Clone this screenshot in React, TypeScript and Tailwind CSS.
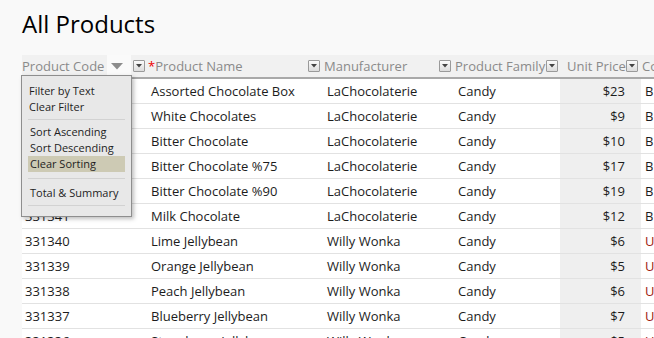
import React from "react";

type Row = { code: string; name: string; mfr: string; fam: string; price: string; last: string; red?: boolean };

const rows: Row[] = [
  { code: "331346", name: "Assorted Chocolate Box", mfr: "LaChocolaterie", fam: "Candy", price: "$23", last: "B" },
  { code: "331345", name: "White Chocolates", mfr: "LaChocolaterie", fam: "Candy", price: "$9", last: "B" },
  { code: "331344", name: "Bitter Chocolate", mfr: "LaChocolaterie", fam: "Candy", price: "$10", last: "B" },
  { code: "331343", name: "Bitter Chocolate %75", mfr: "LaChocolaterie", fam: "Candy", price: "$17", last: "B" },
  { code: "331342", name: "Bitter Chocolate %90", mfr: "LaChocolaterie", fam: "Candy", price: "$19", last: "B" },
  { code: "331341", name: "Milk Chocolate", mfr: "LaChocolaterie", fam: "Candy", price: "$12", last: "B" },
  { code: "331340", name: "Lime Jellybean", mfr: "Willy Wonka", fam: "Candy", price: "$6", last: "U", red: true },
  { code: "331339", name: "Orange Jellybean", mfr: "Willy Wonka", fam: "Candy", price: "$5", last: "U", red: true },
  { code: "331338", name: "Peach Jellybean", mfr: "Willy Wonka", fam: "Candy", price: "$6", last: "U", red: true },
  { code: "331337", name: "Blueberry Jellybean", mfr: "Willy Wonka", fam: "Candy", price: "$7", last: "U", red: true },
  { code: "331336", name: "Strawberry Jellybean", mfr: "Willy Wonka", fam: "Candy", price: "$5", last: "U", red: true },
];

function DropBox() {
  return (
    <span className="flex h-[12px] w-[12px] shrink-0 items-center justify-center rounded-[1px] border border-[#9a9a9a] bg-gradient-to-b from-[#fbfbfb] to-[#dcdcdc]">
      <svg width="6" height="4" viewBox="0 0 6 4">
        <path d="M0 0 L6 0 L3 3.5 Z" fill="#444" />
      </svg>
    </span>
  );
}

const cols = "grid grid-cols-[126px_175px_130px_107px_81px_40px]";

export default function App() {
  return (
    <div className="relative h-[338px] w-[654px] overflow-hidden bg-[#f9f9f9] font-['Open_Sans',sans-serif]">
      <h1 className="pl-[22px] pt-[8px] text-[24px] leading-[32px] text-black">All Products</h1>

      <div className="ml-[22px] mt-[15px] w-[680px]">
        {/* header */}
        <div className={`${cols} h-[24px] border-b-2 border-[#a9a9a9] bg-[#f1f1f1] text-[13px] text-[#8a8a8a]`}>
          <div className="flex min-w-0 items-center whitespace-nowrap">
            <span className="shrink-0 leading-[22px]">Product Code</span>
            <span className="ml-[3px] flex h-[22px] w-[24px] shrink-0 items-center bg-[#fafafa] pl-[4px]">
              <svg width="12" height="7" viewBox="0 0 12 7">
                <path d="M0 0 L12 0 L6 6.5 Z" fill="#8c8c8c" />
              </svg>
            </span>
            <span className="ml-auto mr-[3px]"><DropBox /></span>
          </div>
          <div className="flex min-w-0 items-center whitespace-nowrap">
            <span className="leading-[22px]"><span className="text-[#e00]">*</span>Product Name</span>
            <span className="ml-auto mr-[3px]"><DropBox /></span>
          </div>
          <div className="flex min-w-0 items-center whitespace-nowrap pl-[1px]">
            <span className="leading-[22px]">Manufacturer</span>
            <span className="ml-auto mr-[2px]"><DropBox /></span>
          </div>
          <div className="flex min-w-0 items-center whitespace-nowrap pl-[2px]">
            <span className="leading-[22px]">Product Family</span>
            <span className="ml-auto mr-[2px]"><DropBox /></span>
          </div>
          <div className="flex min-w-0 items-center whitespace-nowrap pl-[7px]">
            <span className="leading-[22px]">Unit Price</span>
            <span className="ml-auto mr-[4px]"><DropBox /></span>
          </div>
          <div className="flex min-w-0 items-center overflow-hidden whitespace-nowrap pl-[1px]">
            <span className="leading-[22px]">Co</span>
          </div>
        </div>

        {/* rows */}
        {rows.map((r) => (
          <div key={r.code} className={`${cols} h-[25px] border-b border-[#e2e2e2] bg-white pt-[1px] text-[13px] text-[#1c1c1c]`}>
            <div className="flex items-center pl-[3px]">{r.code}</div>
            <div className="flex items-center whitespace-nowrap pl-[3px]">{r.name}</div>
            <div className="flex items-center whitespace-nowrap pl-[4px]">{r.mfr}</div>
            <div className="flex items-center pl-[5px]">{r.fam}</div>
            <div className="-mt-[1px] flex items-center justify-end bg-[#efefef] pr-[16px] pt-[1px]">{r.price}</div>
            <div className={`flex items-center pl-[4px] ${r.red ? "text-[#a01b12]" : "text-[#1c1c1c]"}`}>{r.last}</div>
          </div>
        ))}
      </div>

      {/* dropdown menu */}
      <div className="absolute left-[21px] top-[75px] h-[142px] w-[111px] border border-[#8e8e8e] bg-[#e8e8e8] pt-[7px] text-[11px] text-[#1e1e1e] shadow-[2px_2px_4px_rgba(0,0,0,0.25)]">
        <div className="mx-[6px] h-[16px] px-[1px] leading-[16px]">Filter by Text</div>
        <div className="mx-[6px] h-[16px] px-[1px] leading-[16px]">Clear Filter</div>
        <div className="mx-[6px] my-[4px] h-px bg-[#d2d2d2]" />
        <div className="mx-[6px] h-[16px] px-[2px] leading-[16px]">Sort Ascending</div>
        <div className="mx-[6px] h-[16px] px-[2px] leading-[16px]">Sort Descending</div>
        <div className="mx-[6px] h-[16px] bg-[#cdcab4] px-[2px] leading-[16px]">Clear Sorting</div>
        <div className="mx-[6px] my-[6px] h-px bg-[#d2d2d2]" />
        <div className="mx-[6px] h-[16px] px-[2px] leading-[16px]">Total &amp; Summary</div>
        <div className="mx-[6px] mt-[4px] h-px bg-[#d2d2d2]" />
      </div>
    </div>
  );
}
